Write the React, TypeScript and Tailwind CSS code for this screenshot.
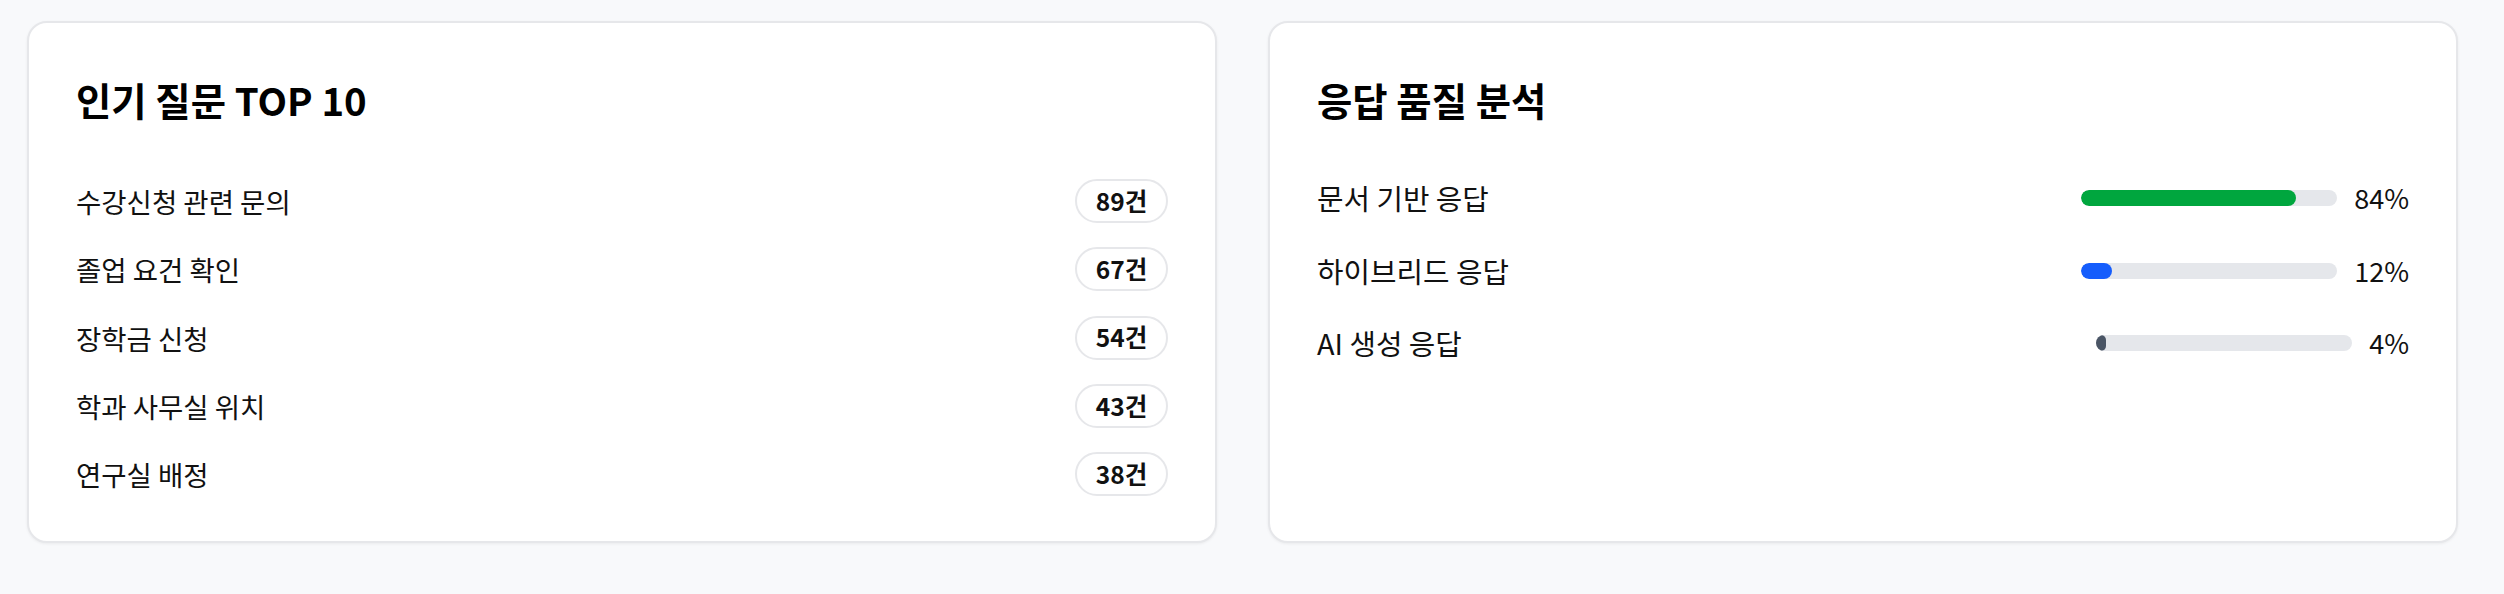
import React from "react";

const questions = [
  { title: "수강신청 관련 문의", count: 89 },
  { title: "졸업 요건 확인", count: 67 },
  { title: "장학금 신청", count: 54 },
  { title: "학과 사무실 위치", count: 43 },
  { title: "연구실 배정", count: 38 },
];

const quality = [
  { label: "문서 기반 응답", value: 84, color: "bg-green-600" },
  { label: "하이브리드 응답", value: 12, color: "bg-blue-600" },
  { label: "AI 생성 응답", value: 4, color: "bg-gray-600" },
];

export default function App() {
  return (
    <div className="min-h-screen bg-[#f8f9fb] font-['Noto_Sans_CJK_KR',sans-serif] text-[#111]">
      <div className="grid grid-cols-2 gap-[51px] pl-[27px] pr-[46px] pt-[21px]">
        {/* 인기 질문 */}
        <div className="rounded-[20px] border-2 border-[#e6e7ea] bg-white px-[47px] pt-[52px] pb-[45px] shadow-[0_1px_3px_rgba(0,0,0,0.06)]">
          <h2 className="mb-[56px] text-[38.4px] font-bold leading-[48px] text-black">
            인기 질문 TOP 10
          </h2>
          <ul className="flex flex-col gap-[24.3px]">
            {questions.map((q) => (
              <li key={q.title} className="flex h-[44px] items-center justify-between">
                <span className="text-[27.5px] leading-[36px]">{q.title}</span>
                <span className="flex h-[44px] w-[93px] items-center justify-center rounded-full border-2 border-[#e6e7ea] text-[24.5px] font-bold">
                  {q.count}건
                </span>
              </li>
            ))}
          </ul>
        </div>

        {/* 응답 품질 */}
        <div className="rounded-[20px] border-2 border-[#e6e7ea] bg-white px-[47px] pt-[52px] pb-[45px] shadow-[0_1px_3px_rgba(0,0,0,0.06)]">
          <h2 className="mb-[57px] text-[38.4px] font-bold leading-[48px] text-black">
            응답 품질 분석
          </h2>
          <ul className="flex flex-col gap-[36.7px]">
            {quality.map((r) => (
              <li key={r.label} className="flex h-[36px] items-center">
                <span className="flex-1 text-[28.8px] leading-[36px]">{r.label}</span>
                <div className="h-4 w-[256px] overflow-hidden rounded-full bg-gray-200">
                  <div
                    className={`h-full rounded-full ${r.color}`}
                    style={{ width: `${r.value}%` }}
                  />
                </div>
                <span className="ml-[17px] text-[27px] leading-[36px]">{r.value}%</span>
              </li>
            ))}
          </ul>
        </div>
      </div>
    </div>
  );
}
